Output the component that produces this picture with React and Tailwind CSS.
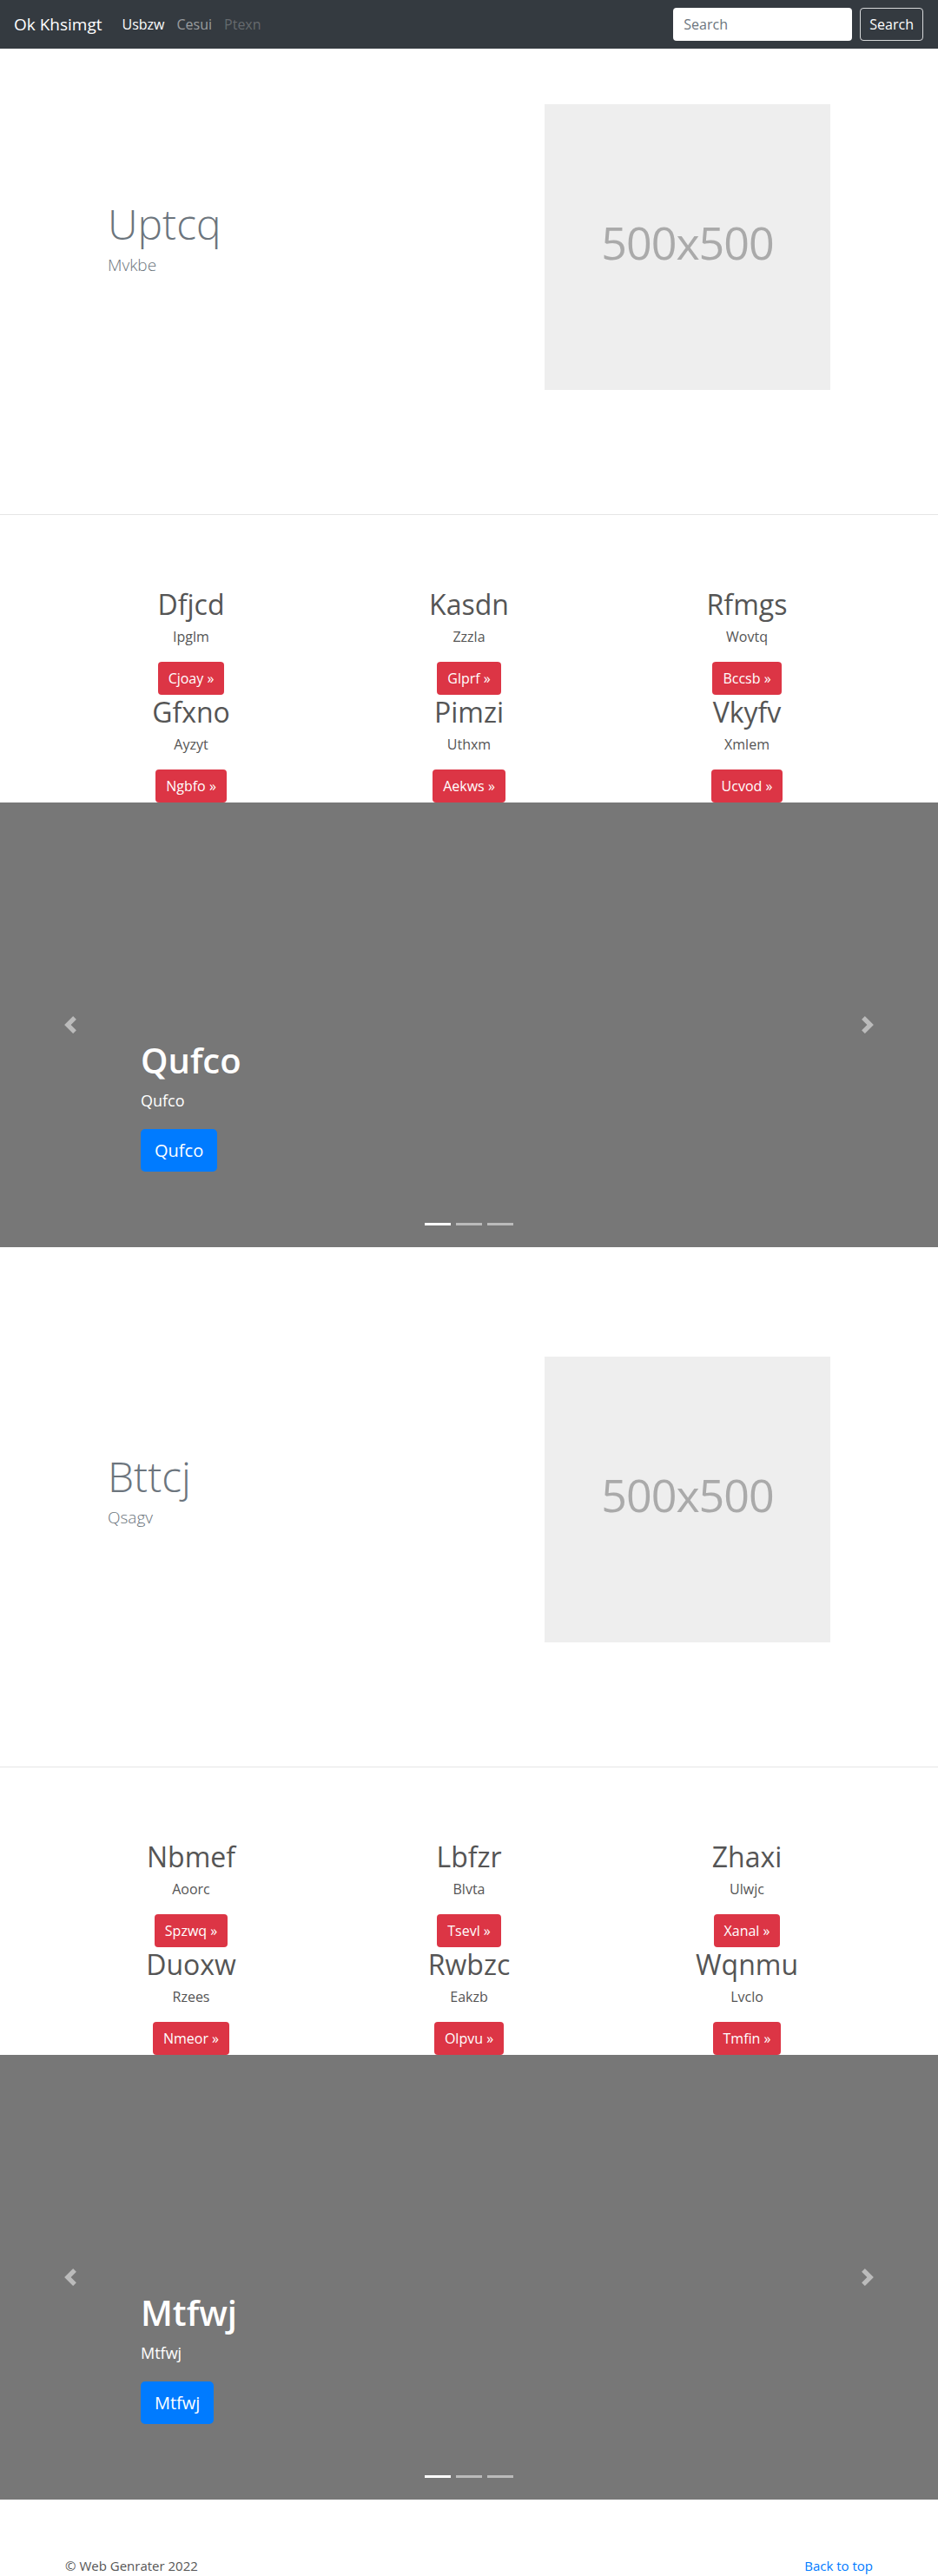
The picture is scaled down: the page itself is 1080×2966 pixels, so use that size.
import React from 'react';

const font = { fontFamily: '"Open Sans", "Noto Sans", sans-serif' };

const Navbar = () => (
  <nav className="h-[56px] bg-[#343a40] flex items-center pl-4 pr-[17px]">
    <a className="text-[19px] leading-[30px] text-white mr-4">Ok Khsimgt</a>
    <div className="flex items-center text-[16px] leading-[24px]">
      <a className="px-[7px] text-white">Usbzw</a>
      <a className="px-[7px] text-white/50">Cesui</a>
      <a className="px-[7px] text-white/25">Ptexn</a>
    </div>
    <div className="ml-auto flex items-center">
      <input
        placeholder="Search"
        className="w-[206px] h-[38px] rounded-[4px] bg-white px-3 text-[16px] text-[#495057] placeholder:text-[#6c757d] outline-none mr-[9px]"
      />
      <button className="h-[38px] px-[10px] rounded-[4px] border border-white/80 text-white text-[16px]">
        Search
      </button>
    </div>
  </nav>
);

const Hero = ({ title, subtitle, top }) => (
  <section className={`${top} pb-[143px] border-b border-[#e5e5e5] flex`}>
    <div className="w-[627px] pl-[124px] pt-[108px]">
      <h1 className="text-[48px] leading-[60px] font-light text-[#6c757d]">{title}</h1>
      <p className="mt-[4px] text-[19px] leading-[27px] font-light text-[#6c757d]">{subtitle}</p>
    </div>
    <div className="w-[329px] h-[329px] pb-[12px] bg-[#eee] flex items-center justify-center">
      <span className="text-[52px] text-[#aaa] tracking-[-1px]">500x500</span>
    </div>
  </section>
);

const Feature = ({ title, text, cta }) => (
  <div className="flex flex-col items-center text-center h-[124px]">
    <h2 className="text-[32px] leading-[40px] font-medium text-[#555]">{title}</h2>
    <p className="mt-[5px] text-[16px] leading-[24px] text-[#555]">{text}</p>
    <a className="mt-[17px] h-[38px] px-3 flex items-center rounded-[4px] bg-[#dc3545] text-white text-[16px]">
      {cta} &raquo;
    </a>
  </div>
);

const Features = ({ items }) => (
  <section className="pt-[83px]">
    <div className="w-[960px] mx-auto grid grid-cols-3">
      {items.map((it) => (
        <Feature key={it[0]} title={it[0]} text={it[1]} cta={it[2]} />
      ))}
    </div>
  </section>
);

const Chevron = ({ dir }) => (
  <svg width="20" height="20" viewBox="0 0 8 8" className="fill-white opacity-50">
    {dir === 'prev' ? (
      <path d="M5.25 0l-4 4 4 4 1.5-1.5L4.25 4l2.5-2.5L5.25 0z" />
    ) : (
      <path d="M2.75 0l-1.5 1.5L3.75 4l-2.5 2.5L2.75 8l4-4-4-4z" />
    )}
  </svg>
);

const Carousel = ({ title, className = '' }) => (
  <section className={`relative h-[512px] bg-[#777] ${className}`}>
    <div className="absolute left-[71px] top-[246px]">
      <Chevron dir="prev" />
    </div>
    <div className="absolute right-[71px] top-[246px]">
      <Chevron dir="next" />
    </div>
    <div className="absolute left-[162px] bottom-[87px] text-white">
      <h1 className="text-[40px] leading-[48px] font-semibold">{title}</h1>
      <p className="mt-[9px] text-[18px] leading-[27px]">{title}</p>
      <a className="mt-[19px] h-[49px] px-4 inline-flex items-center rounded-[5px] bg-[#007bff] text-[20px]">
        {title}
      </a>
    </div>
    <div className="absolute bottom-[25px] left-0 right-0 flex justify-center gap-[6px]">
      <span className="w-[30px] h-[3px] bg-white" />
      <span className="w-[30px] h-[3px] bg-white/50" />
      <span className="w-[30px] h-[3px] bg-white/50" />
    </div>
  </section>
);

const features1 = [
  ['Dfjcd', 'Ipglm', 'Cjoay'],
  ['Kasdn', 'Zzzla', 'Glprf'],
  ['Rfmgs', 'Wovtq', 'Bccsb'],
  ['Gfxno', 'Ayzyt', 'Ngbfo'],
  ['Pimzi', 'Uthxm', 'Aekws'],
  ['Vkyfv', 'Xmlem', 'Ucvod'],
];

const features2 = [
  ['Nbmef', 'Aoorc', 'Spzwq'],
  ['Lbfzr', 'Blvta', 'Tsevl'],
  ['Zhaxi', 'Ulwjc', 'Xanal'],
  ['Duoxw', 'Rzees', 'Nmeor'],
  ['Rwbzc', 'Eakzb', 'Olpvu'],
  ['Wqnmu', 'Lvclo', 'Tmfin'],
];

export default function App() {
  return (
    <div style={font} className="bg-white">
      <Navbar />
      <Hero title="Uptcq" subtitle="Mvkbe" top="pt-[64px]" />
      <Features items={features1} />
      <Carousel title="Qufco" />
      <Hero title="Bttcj" subtitle="Qsagv" top="pt-[126px]" />
      <Features items={features2} />
      <Carousel title="Mtfwj" />
      <footer className="mt-16 w-[960px] mx-auto px-[15px] flex justify-between text-[15px] leading-[24px] h-[24px]">
        <p className="text-[#555]">&copy; Web Genrater 2022</p>
        <a className="text-[#007bff]">Back to top</a>
      </footer>
    </div>
  );
}
